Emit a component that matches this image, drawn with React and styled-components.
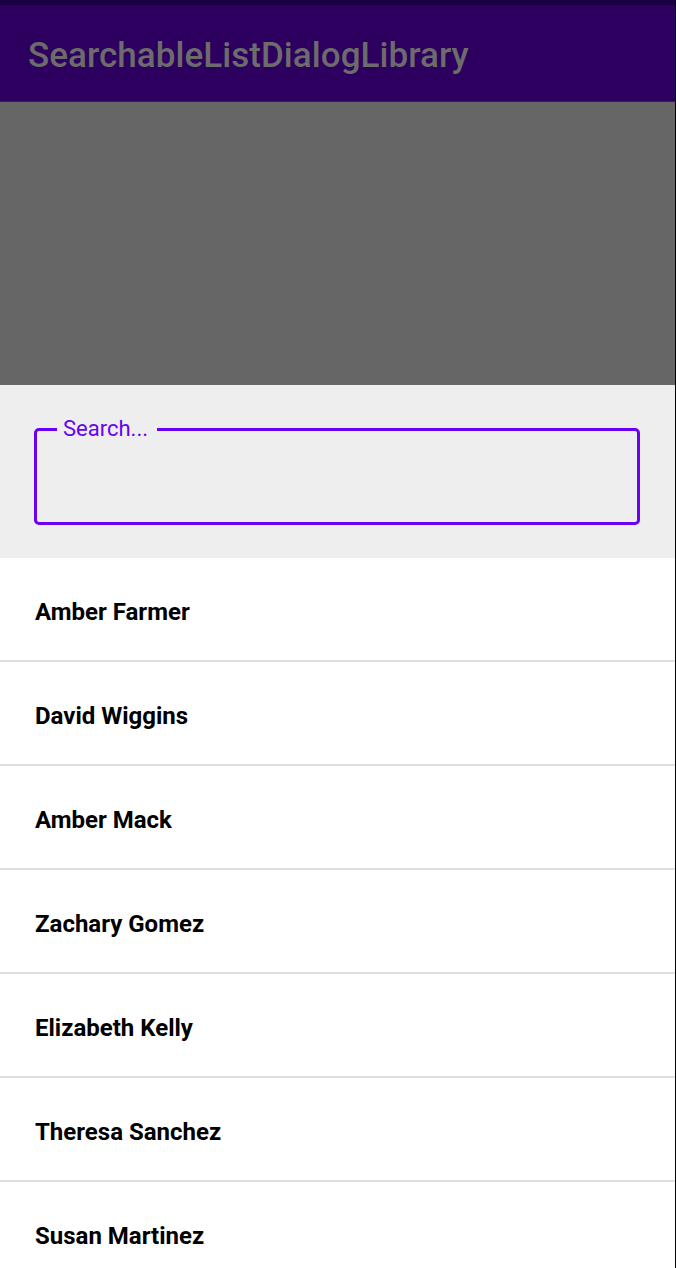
import React from "react";
import styled, { createGlobalStyle } from "styled-components";

const GlobalStyle = createGlobalStyle`
  html, body {
    margin: 0;
    padding: 0;
    background: #ffffff;
    font-family: Roboto, "Noto Sans", sans-serif;
  }
`;

const names = [
  "Amber Farmer",
  "David Wiggins",
  "Amber Mack",
  "Zachary Gomez",
  "Elizabeth Kelly",
  "Theresa Sanchez",
  "Susan Martinez"
];

const Screen = styled.div`
  width: 676px;
  height: 1268px;
  overflow: hidden;
  display: flex;
  flex-direction: column;
  box-sizing: border-box;
  border-right: 1px solid #000;
`;

const StatusBar = styled.div`
  height: 5px;
  background: #1a0040;
  flex-shrink: 0;
`;

const AppBar = styled.div`
  height: 97px;
  background: #2d005f;
  border-bottom: 1px solid #3a1470;
  display: flex;
  align-items: center;
  padding: 5px 0 0 28px;
  flex-shrink: 0;
  box-sizing: border-box;
`;

const Title = styled.h1`
  margin: 0;
  font-size: 35px;
  font-weight: 500;
  color: #6c6c6c;
  letter-spacing: 0.05px;
`;

const Scrim = styled.div`
  height: 283px;
  background: #666666;
  flex-shrink: 0;
`;

const Sheet = styled.div`
  flex: 1;
  background: #ffffff;
  display: flex;
  flex-direction: column;
`;

const SearchArea = styled.div`
  background: #eeeeee;
  height: 173px;
  padding: 31px 35px 0 34px;
  box-sizing: border-box;
  flex-shrink: 0;
`;

const Field = styled.fieldset`
  margin: 0;
  height: 109px;
  box-sizing: border-box;
  border: 3px solid #6a00f4;
  border-radius: 5px;
  padding: 0 22px;
`;

const Legend = styled.legend`
  padding: 0 9px 0 6px;
  margin-left: -2px;
  font-size: 22px;
  color: #6a00f4;
  line-height: 26px;
`;

const List = styled.ul`
  list-style: none;
  margin: 0;
  padding: 0;
`;

const Row = styled.li`
  height: 104px;
  box-sizing: border-box;
  border-bottom: 2px solid #dedede;
  display: flex;
  align-items: center;
  padding: 5px 0 0 35px;
  font-size: 24px;
  font-weight: 700;
  color: #000;
`;

export default function App() {
  return (
    <>
      <GlobalStyle />
      <Screen>
        <StatusBar />
        <AppBar>
          <Title>SearchableListDialogLibrary</Title>
        </AppBar>
        <Scrim />
        <Sheet>
          <SearchArea>
            <Field>
              <Legend>Search...</Legend>
            </Field>
          </SearchArea>
          <List>
            {names.map((n) => (
              <Row key={n}>{n}</Row>
            ))}
          </List>
        </Sheet>
      </Screen>
    </>
  );
}
